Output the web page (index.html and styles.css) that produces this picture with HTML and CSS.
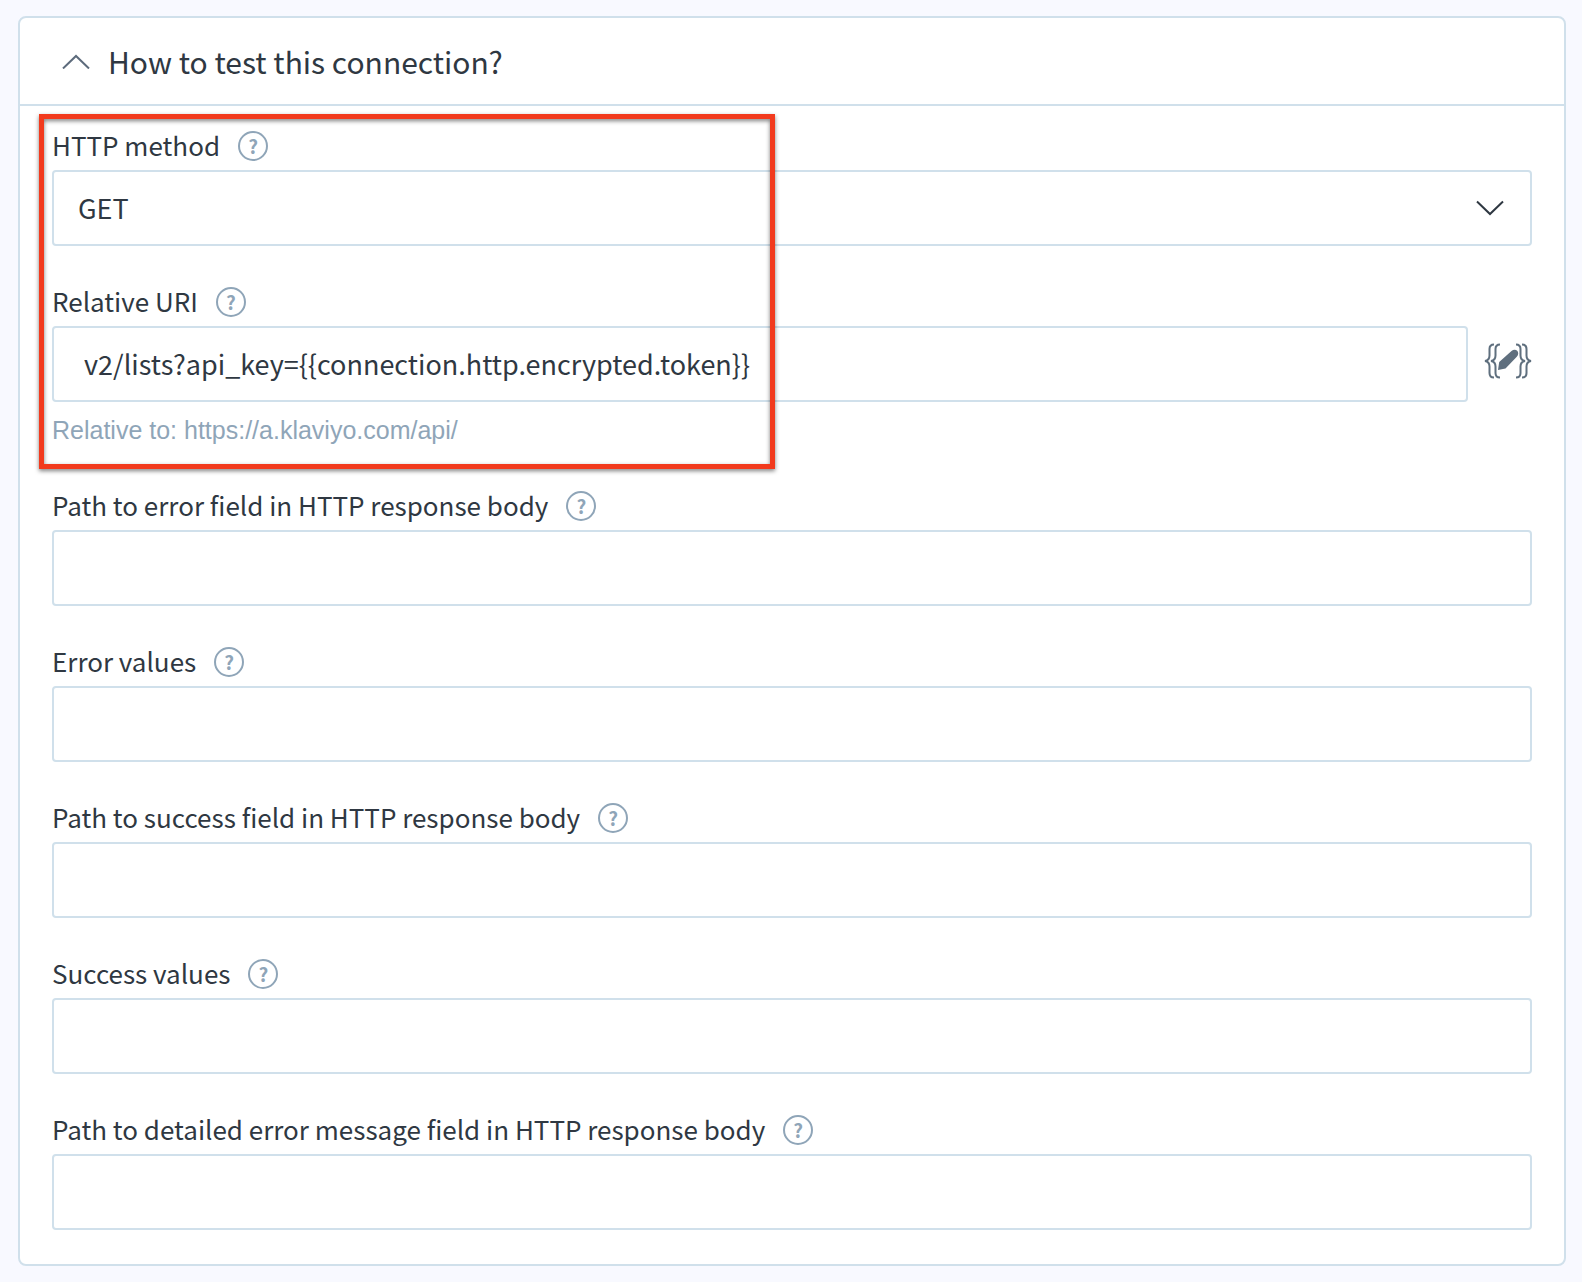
FILE: index.html
```html
<!DOCTYPE html>
<html lang="en">
<head>
<meta charset="utf-8">
<meta name="viewport" content="width=device-width, initial-scale=1">
<title>How to test this connection?</title>
<link rel="stylesheet" href="styles.css">
</head>
<body>
<main class="panel">
  <h2 class="panel-header">
    <button class="panel-toggle" type="button" aria-expanded="true" aria-controls="test-connection">
      <svg class="chevron" viewBox="0 0 28 16" aria-hidden="true"><path d="M1 15.500 14 3l13 12.500"/></svg>
      <span>How to test this connection?</span>
    </button>
  </h2>
  <form class="panel-body" id="test-connection">
    <div class="highlight">
      <div class="field">
        <div class="field-head">
          <label for="method">HTTP method</label>
          <button class="help" type="button" aria-label="Help for HTTP method">?</button>
        </div>
        <div class="select-wrap">
          <select class="control" id="method"><option>GET</option></select>
          <svg class="chevron select-arrow" viewBox="0 0 28 16" aria-hidden="true"><path d="M1 1.500 14 14 27 1.500"/></svg>
        </div>
      </div>
      <div class="field">
        <div class="field-head">
          <label for="uri">Relative URI</label>
          <button class="help" type="button" aria-label="Help for relative URI">?</button>
        </div>
        <div class="input-row">
          <input class="control control-uri" id="uri" type="text" aria-describedby="uri-hint" value="v2/lists?api_key={{connection.http.encrypted.token}}">
          <button class="edit" type="button" aria-label="Edit expression">
            <svg viewBox="0 0 48 36" aria-hidden="true">
              <g class="brace">
                <path d="M10 1.500C6.500 1.500 5.500 3 5.500 6v6.500C5.500 16 4 17.500 1 18c3 .5 4.500 2 4.500 5.500V30c0 3 1 4.500 4.500 4.500"/>
                <path d="M16 1.500c-3.500 0-4.500 1.500-4.500 4.500v6.500C11.500 16 10 17.500 7 18c3 .5 4.500 2 4.500 5.500V30c0 3 1 4.500 4.500 4.500"/>
                <path d="M32 1.500c3.500 0 4.500 1.500 4.500 4.500v6.500c0 3.500 1.500 5 4.500 5.500-3 .5-4.500 2-4.500 5.500V30c0 3-1 4.500-4.500 4.500"/>
                <path d="M38 1.500c3.500 0 4.500 1.500 4.500 4.500v6.500c0 3.500 1.500 5 4.500 5.500-3 .5-4.500 2-4.500 5.500V30c0 3-1 4.500-4.500 4.500"/>
              </g>
              <path class="pencil" d="M14 27l1.200-8L27.500 8c2-1.800 4.300-1.700 5.700-.2s1.500 4-.4 5.900L21.500 25.500z"/>
            </svg>
          </button>
        </div>
        <p class="hint" id="uri-hint">Relative to: https://a.klaviyo.com/api/</p>
      </div>
    </div>
    <div class="field">
      <div class="field-head">
        <label for="error-path">Path to error field in HTTP response body</label>
        <button class="help" type="button" aria-label="Help for error path">?</button>
      </div>
      <input class="control" id="error-path" type="text">
    </div>
    <div class="field">
      <div class="field-head">
        <label for="error-values">Error values</label>
        <button class="help" type="button" aria-label="Help for error values">?</button>
      </div>
      <input class="control" id="error-values" type="text">
    </div>
    <div class="field">
      <div class="field-head">
        <label for="success-path">Path to success field in HTTP response body</label>
        <button class="help" type="button" aria-label="Help for success path">?</button>
      </div>
      <input class="control" id="success-path" type="text">
    </div>
    <div class="field">
      <div class="field-head">
        <label for="success-values">Success values</label>
        <button class="help" type="button" aria-label="Help for success values">?</button>
      </div>
      <input class="control" id="success-values" type="text">
    </div>
    <div class="field">
      <div class="field-head">
        <label for="message-path">Path to detailed error message field in HTTP response body</label>
        <button class="help" type="button" aria-label="Help for error message path">?</button>
      </div>
      <input class="control" id="message-path" type="text">
    </div>
  </form>
</main>
</body>
</html>
```
FILE: styles.css
```css
*,
*::before,
*::after {
  box-sizing: border-box;
}

body {
  margin: 0;
  padding: 16px 16px 16px 18px;
  background: #f8f9ff;
  color: #2f3842;
  font-family: "Noto Sans CJK SC", "Noto Sans", sans-serif;
  font-size: 26px;
}

button,
input,
select {
  margin: 0;
  color: inherit;
  font: inherit;
}

button {
  padding: 0;
  border: 0;
  background: none;
  cursor: pointer;
}

.panel {
  border: 2px solid #d0e0eb;
  border-radius: 8px;
  background: #fff;
}

.panel-header {
  margin: 0;
  border-bottom: 2px solid #d0e0eb;
  font-size: 30px;
  font-weight: 400;
}

.panel-toggle {
  display: flex;
  align-items: center;
  gap: 18px;
  width: 100%;
  height: 86px;
  padding: 0 42px;
  text-align: left;
}

.chevron {
  width: 28px;
  height: 16px;
  fill: none;
  stroke: #5d6b7c;
  stroke-width: 2;
}

.panel-body,
.highlight {
  display: flex;
  flex-direction: column;
  gap: 41px;
}

.panel-body {
  padding: 25px 32px 34px;
}

.highlight {
  position: relative;
}

.highlight::after {
  content: "";
  position: absolute;
  top: -17px;
  bottom: -19px;
  left: -13px;
  width: calc(50% - 4px);
  border: 5px solid #f23a1d;
  filter: drop-shadow(0 2px 2px rgba(0, 0, 0, 0.5));
  pointer-events: none;
}

.field-head {
  display: flex;
  align-items: center;
  gap: 18px;
  height: 30px;
  margin-bottom: 9px;
  line-height: 28px;
}

.field-head label {
  padding-bottom: 2px;
}

.help {
  width: 30px;
  height: 30px;
  padding-bottom: 1px;
  border: 2px solid #8fa5b8;
  border-radius: 50%;
  color: #8fa5b8;
  font-size: 19px;
  font-weight: 700;
  line-height: 25px;
}

.control {
  display: block;
  width: 100%;
  height: 76px;
  padding: 0 24px 2px;
  border: 2px solid #d0e0eb;
  border-radius: 4px;
  background: #fff;
  font-size: 27px;
  appearance: none;
}

.control-uri {
  flex: 1;
  min-width: 0;
  padding: 0 30px 2px;
}

.select-wrap {
  position: relative;
}

.select-arrow {
  position: absolute;
  top: 30px;
  right: 28px;
  stroke: #2f3842;
  pointer-events: none;
}

.input-row {
  display: flex;
  align-items: center;
  gap: 16px;
}

.edit {
  width: 48px;
  height: 48px;
  margin-bottom: 6px;
}

.edit svg {
  display: block;
  width: 48px;
  height: 36px;
}

.brace {
  fill: none;
  stroke: #5f6f7e;
  stroke-width: 2;
}

.pencil {
  fill: #5f6f7e;
}

.hint {
  margin: 0;
  padding: 10px 0 2px;
  color: #8fa5b8;
  font-family: "Liberation Sans", Arial, sans-serif;
  font-size: 25px;
  line-height: 36px;
}
```
